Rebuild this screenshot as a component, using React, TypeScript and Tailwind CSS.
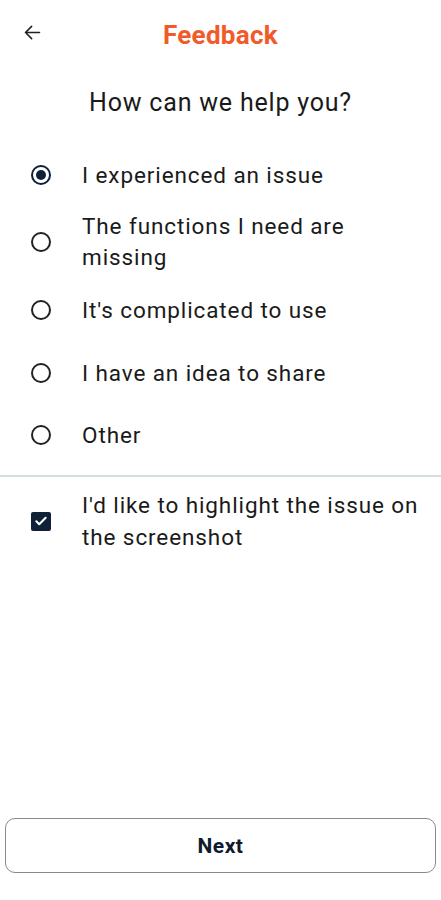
import React from "react";

const Radio = ({ checked }: { checked?: boolean }) => (
  <div className={`w-[20px] h-[20px] rounded-full border-2 flex items-center justify-center ${checked ? "border-[#0f2137]" : "border-[#222]"}`}>
    {checked && <div className="w-[10px] h-[10px] rounded-full bg-[#0f2137]" />}
  </div>
);

const options = [
  { label: "I experienced an issue", checked: true, h: "h-[52px]" },
  { label: "The functions I need are missing", h: "h-[82px]" },
  { label: "It's complicated to use", h: "h-[54px]" },
  { label: "I have an idea to share", h: "h-[72px]" },
  { label: "Other", h: "h-[52px]" },
];

export default function App() {
  return (
    <div className="w-[441px] h-[900px] bg-white relative flex flex-col" style={{ fontFamily: "Roboto, sans-serif" }}>
      <div className="h-[70px] flex items-center relative">
        <button className="absolute left-[20px] top-[20px] w-[24px] h-[24px] flex items-center justify-center">
          <svg width="21" height="21" viewBox="0 0 24 24" fill="none" stroke="#222" strokeWidth="1.8" strokeLinecap="round" strokeLinejoin="round">
            <path d="M20 12H4M11 5l-7 7 7 7" />
          </svg>
        </button>
        <div className="w-full text-center text-[26px] font-bold text-[#f15a29] tracking-[0.3px]">Feedback</div>
      </div>
      <div className="text-center text-[25px] text-[#1a1a1a] mt-[18px] leading-[30px] tracking-[0.8px]">How can we help you?</div>
      <div className="mt-[31px] flex flex-col">
        {options.map((o, i) => (
          <div key={i} className={`flex items-center ${o.h}`}>
            <div className="w-[82px] flex pl-[31px]"><Radio checked={o.checked} /></div>
            <div className="text-[22.5px] leading-[31px] text-[#1a1a1a] w-[300px] tracking-[0.9px]">{o.label}</div>
          </div>
        ))}
      </div>
      <div className="h-[2px] bg-[#d5dfe1] mt-[14px]" />
      <div className="flex items-center h-[88px]">
        <div className="w-[82px] flex pl-[31px]">
          <div className="w-[20px] h-[19px] rounded-[2px] bg-[#0f2137] flex items-center justify-center">
            <svg width="14" height="14" viewBox="0 0 24 24" fill="none" stroke="white" strokeWidth="3.5" strokeLinecap="round" strokeLinejoin="round">
              <path d="M4 12.5l5 5L20 6.5" />
            </svg>
          </div>
        </div>
        <div className="text-[22.5px] leading-[32px] text-[#1a1a1a] w-[350px] tracking-[0.9px]">I'd like to highlight the issue on the screenshot</div>
      </div>
      <div className="flex-1" />
      <div className="px-[5px] pb-[27px]">
        <button className="w-full h-[55px] pt-[3px] rounded-[10px] border-[1.5px] border-[#8a8a8a] flex items-center justify-center text-[21px] font-bold text-[#0f1a2e] tracking-[0.5px]">Next</button>
      </div>
    </div>
  );
}
